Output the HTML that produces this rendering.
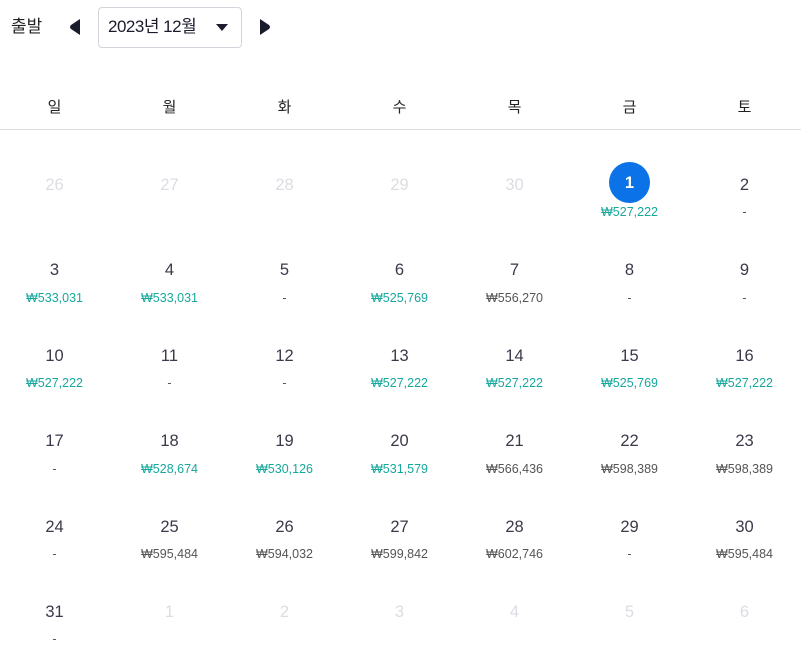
<!DOCTYPE html>
<html><head><meta charset="utf-8"><style>
*{margin:0;padding:0;box-sizing:border-box}
body{width:801px;height:652px;overflow:hidden;background:#fff;font-family:"Liberation Sans","Noto Sans CJK KR",sans-serif;color:#333;position:relative}
.a{position:absolute}
.w{position:absolute;width:115px;text-align:center}
.n{font-size:16.5px;line-height:20px;color:#3a3a4a;margin-top:2px}
.p{font-size:12.5px;line-height:14px;color:#555}
.t{color:#16a89c}
.g{color:#dcdde3}
.h{font-size:15px;line-height:20px;color:#222;top:98px}
</style></head><body>
<div class="a" style="left:11px;top:16px;font-size:17px;line-height:22px;color:#222">출발</div>
<svg class="a" style="left:69px;top:18px" width="12" height="18" viewBox="0 0 12 18"><path d="M11 1 L11 17 L2 11 Q0 9 2 7 Z" fill="#1b1b2e"/></svg>
<div class="a" style="left:98px;top:7px;width:144px;height:41px;border:1px solid #d4d4dc;border-radius:4px"></div>
<div class="a" style="left:108px;top:16px;font-size:17px;line-height:22px;color:#1b1b2e;letter-spacing:-0.5px">2023년 12월</div>
<svg class="a" style="left:216px;top:24px" width="12" height="7" viewBox="0 0 12 7"><path d="M0 0 L12 0 L6 7 Z" fill="#1b1b2e"/></svg>
<svg class="a" style="left:259px;top:18px" width="12" height="18" viewBox="0 0 12 18"><path d="M1 1 L1 17 L10 11 Q12 9 10 7 Z" fill="#1b1b2e"/></svg>

<div class="w h" style="left:-3px">일</div>
<div class="w h" style="left:112px">월</div>
<div class="w h" style="left:227px">화</div>
<div class="w h" style="left:342px">수</div>
<div class="w h" style="left:457px">목</div>
<div class="w h" style="left:572px">금</div>
<div class="w h" style="left:687px">토</div>
<div class="a" style="left:0;top:129px;width:801px;height:1px;background:#dedee4"></div>

<div class="w n g" style="left:-3px;top:173px">26</div>
<div class="w n g" style="left:112px;top:173px">27</div>
<div class="w n g" style="left:227px;top:173px">28</div>
<div class="w n g" style="left:342px;top:173px">29</div>
<div class="w n g" style="left:457px;top:173px">30</div>
<div class="a" style="left:609px;top:162px;width:41px;height:41px;border-radius:50%;background:#0b72e7"></div>
<div class="w n" style="left:572px;top:171px;color:#fff;font-weight:bold">1</div>
<div class="w p t" style="left:572px;top:205px">₩527,222</div>
<div class="w n" style="left:687px;top:173px">2</div>
<div class="w p" style="left:687px;top:205px">-</div>

<div class="w n" style="left:-3px;top:258px">3</div><div class="w p t" style="left:-3px;top:291px">₩533,031</div>
<div class="w n" style="left:112px;top:258px">4</div><div class="w p t" style="left:112px;top:291px">₩533,031</div>
<div class="w n" style="left:227px;top:258px">5</div><div class="w p" style="left:227px;top:291px">-</div>
<div class="w n" style="left:342px;top:258px">6</div><div class="w p t" style="left:342px;top:291px">₩525,769</div>
<div class="w n" style="left:457px;top:258px">7</div><div class="w p" style="left:457px;top:291px">₩556,270</div>
<div class="w n" style="left:572px;top:258px">8</div><div class="w p" style="left:572px;top:291px">-</div>
<div class="w n" style="left:687px;top:258px">9</div><div class="w p" style="left:687px;top:291px">-</div>

<div class="w n" style="left:-3px;top:344px">10</div><div class="w p t" style="left:-3px;top:376px">₩527,222</div>
<div class="w n" style="left:112px;top:344px">11</div><div class="w p" style="left:112px;top:376px">-</div>
<div class="w n" style="left:227px;top:344px">12</div><div class="w p" style="left:227px;top:376px">-</div>
<div class="w n" style="left:342px;top:344px">13</div><div class="w p t" style="left:342px;top:376px">₩527,222</div>
<div class="w n" style="left:457px;top:344px">14</div><div class="w p t" style="left:457px;top:376px">₩527,222</div>
<div class="w n" style="left:572px;top:344px">15</div><div class="w p t" style="left:572px;top:376px">₩525,769</div>
<div class="w n" style="left:687px;top:344px">16</div><div class="w p t" style="left:687px;top:376px">₩527,222</div>

<div class="w n" style="left:-3px;top:429px">17</div><div class="w p" style="left:-3px;top:462px">-</div>
<div class="w n" style="left:112px;top:429px">18</div><div class="w p t" style="left:112px;top:462px">₩528,674</div>
<div class="w n" style="left:227px;top:429px">19</div><div class="w p t" style="left:227px;top:462px">₩530,126</div>
<div class="w n" style="left:342px;top:429px">20</div><div class="w p t" style="left:342px;top:462px">₩531,579</div>
<div class="w n" style="left:457px;top:429px">21</div><div class="w p" style="left:457px;top:462px">₩566,436</div>
<div class="w n" style="left:572px;top:429px">22</div><div class="w p" style="left:572px;top:462px">₩598,389</div>
<div class="w n" style="left:687px;top:429px">23</div><div class="w p" style="left:687px;top:462px">₩598,389</div>

<div class="w n" style="left:-3px;top:515px">24</div><div class="w p" style="left:-3px;top:547px">-</div>
<div class="w n" style="left:112px;top:515px">25</div><div class="w p" style="left:112px;top:547px">₩595,484</div>
<div class="w n" style="left:227px;top:515px">26</div><div class="w p" style="left:227px;top:547px">₩594,032</div>
<div class="w n" style="left:342px;top:515px">27</div><div class="w p" style="left:342px;top:547px">₩599,842</div>
<div class="w n" style="left:457px;top:515px">28</div><div class="w p" style="left:457px;top:547px">₩602,746</div>
<div class="w n" style="left:572px;top:515px">29</div><div class="w p" style="left:572px;top:547px">-</div>
<div class="w n" style="left:687px;top:515px">30</div><div class="w p" style="left:687px;top:547px">₩595,484</div>

<div class="w n" style="left:-3px;top:600px">31</div><div class="w p" style="left:-3px;top:632px">-</div>
<div class="w n g" style="left:112px;top:600px">1</div>
<div class="w n g" style="left:227px;top:600px">2</div>
<div class="w n g" style="left:342px;top:600px">3</div>
<div class="w n g" style="left:457px;top:600px">4</div>
<div class="w n g" style="left:572px;top:600px">5</div>
<div class="w n g" style="left:687px;top:600px">6</div>
</body></html>
